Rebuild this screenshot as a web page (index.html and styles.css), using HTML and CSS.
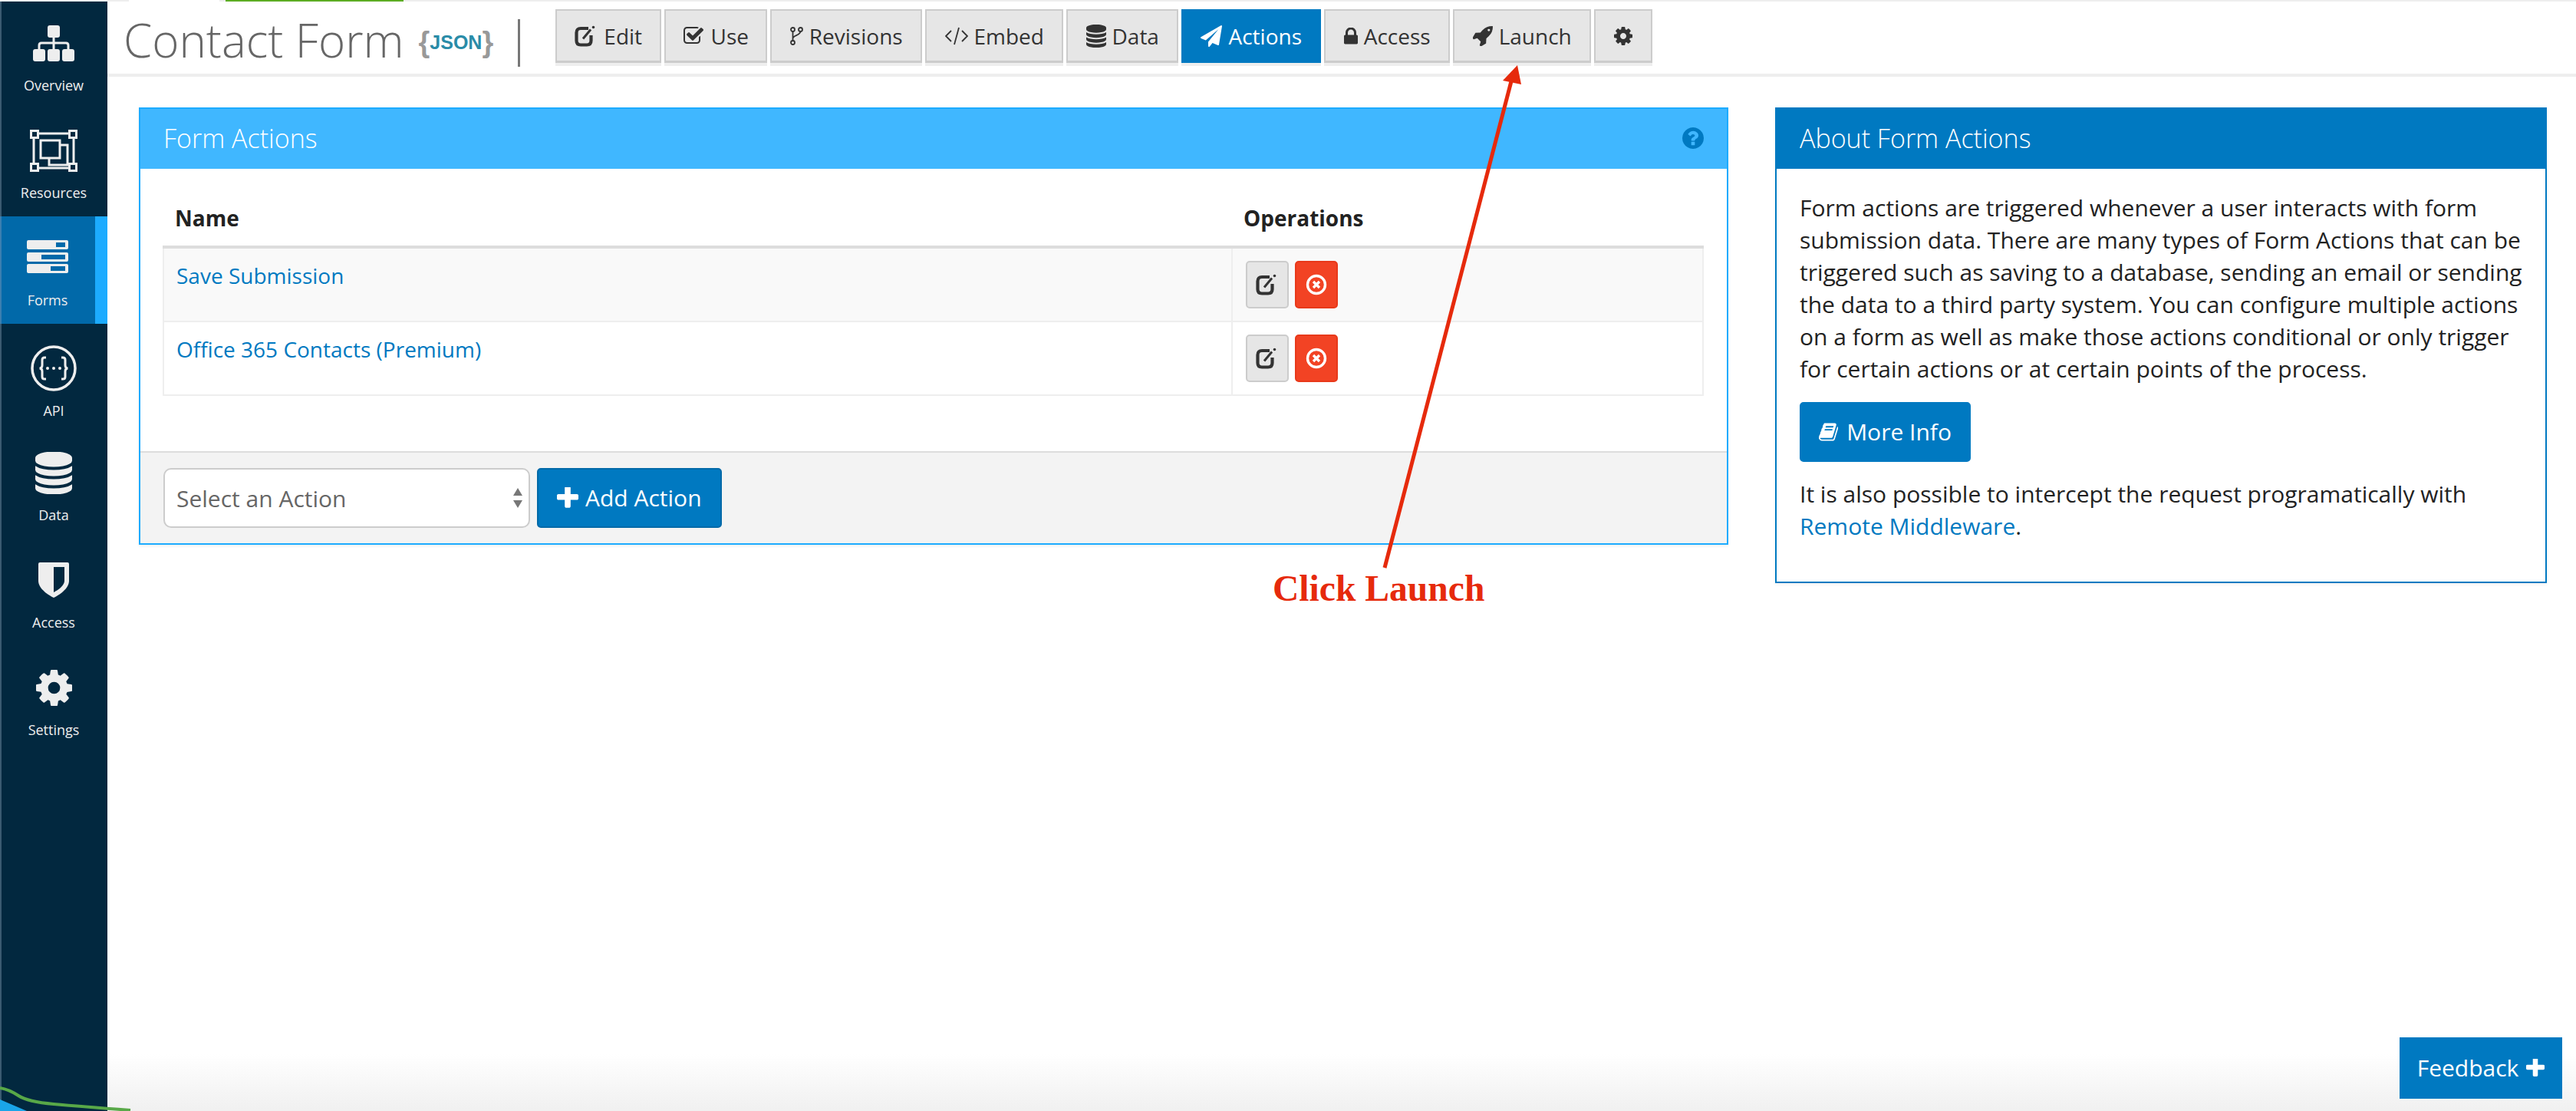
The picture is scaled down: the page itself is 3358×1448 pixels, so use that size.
FILE: index.html

```html
<!DOCTYPE html>
<html lang="en">
<head>
  <meta charset="UTF-8" />
  <meta name="viewport" content="width=device-width, initial-scale=1.0"/>
  <title>Contact Form - Form Actions</title>
  <link rel="stylesheet" href="styles.css">
</head>
<body>
  <svg width="0" height="0" class="defs">
    <symbol id="i-edit" viewBox="0 0 30 28"><path d="M18 4H8Q2.500 4 2.500 9.500V20Q2.500 25.500 8 25.500H16Q21.500 25.500 21.500 20V13" fill="none" stroke="currentColor" stroke-width="4.200"/><path d="M11 17.500L21 5.500" fill="none" stroke="currentColor" stroke-width="3"/><circle cx="24.500" cy="2.500" r="1.800" fill="currentColor"/></symbol>
    <symbol id="i-check" viewBox="0 0 1792 1792"><path d="M1472 930v318q0 119-84.500 203.500t-203.500 84.500h-832q-119 0-203.500-84.500t-84.500-203.500v-832q0-119 84.500-203.500t203.500-84.500h832q63 0 117 25 15 7 18 23 3 17-9 29l-49 49q-10 10-23 10-3 0-9-2-23-6-45-6h-832q-66 0-113 47t-47 113v832q0 66 47 113t113 47h832q66 0 113-47t47-113v-254q0-13 9-22l64-64q10-10 23-10 6 0 12 3 20 8 20 29zm231-489l-814 814q-24 24-57 24t-57-24l-430-430q-24-24-24-57t24-57l110-110q24-24 57-24t57 24l263 263 647-647q24-24 57-24t57 24l110 110q24 24 24 57t-24 57z"/></symbol>
    <symbol id="i-db" viewBox="128 128 1536 1536"><path d="M896 768q237 0 443-43t325-127v170q0 69-103 128t-280 93.500-385 34.500-385-34.500-280-93.500-103-128v-170q119 84 325 127t443 43zm0 768q237 0 443-43t325-127v170q0 69-103 128t-280 93.500-385 34.500-385-34.500-280-93.500-103-128v-170q119 84 325 127t443 43zm0-384q237 0 443-43t325-127v170q0 69-103 128t-280 93.500-385 34.500-385-34.500-280-93.500-103-128v-170q119 84 325 127t443 43zm0-1152q208 0 385 34.500t280 93.500 103 128v128q0 69-103 128t-280 93.500-385 34.500-385-34.500-280-93.500-103-128v-128q0-69 103-128t280-93.500 385-34.500z"/></symbol>
    <symbol id="i-plane" viewBox="0 0 1792 1792"><path d="M1764 11q33 24 27 64l-256 1536q-5 29-32 45-14 8-31 8-11 0-24-5l-453-185-242 295q-18 23-49 23-13 0-22-4-19-7-30.500-23.500t-11.500-36.500v-349l864-1059-1069 925-395-162q-37-14-40-55-2-40 32-59l1664-960q15-9 32-9 20 0 36 11z"/></symbol>
    <symbol id="i-lock" viewBox="320 192 1152 1344"><path d="M640 768h512v-192q0-106-75-181t-181-75-181 75-75 181v192zm832 96v576q0 40-28 68t-68 28h-960q-40 0-68-28t-28-68v-576q0-40 28-68t68-28h32v-192q0-184 132-316t316-132 316 132 132 316v192h32q40 0 68 28t28 68z"/></symbol>
    <symbol id="i-rocket" viewBox="128 128 1600 1600"><path d="M1504 448q0-40-28-68t-68-28-68 28-28 68 28 68 68 28 68-28 28-68zm224-288q0 249-75.500 430.500t-253.500 360.500q-81 80-195 176l-20 379q-2 16-16 26l-384 224q-7 4-16 4-12 0-23-9l-64-64q-13-14-8-32l85-276-281-281-276 85q-3 1-9 1-14 0-23-9l-64-64q-17-19-5-39l224-384q10-14 26-16l379-20q96-114 176-195 188-187 358-258t431-71q14 0 24 9.500t10 22.500z"/></symbol>
    <symbol id="i-cog" viewBox="128 128 1536 1536"><path d="M1152 896q0-106-75-181t-181-75-181 75-75 181 75 181 181 75 181-75 75-181zm512-109v222q0 12-8 23t-20 13l-185 28q-19 54-39 91 35 50 107 138 10 12 10 25t-9 23q-27 37-99 108t-94 71q-12 0-26-9l-138-108q-44 23-91 38-16 136-29 186-7 28-36 28h-222q-14 0-24.500-8.500t-11.500-21.500l-28-184q-49-16-90-37l-141 107q-10 9-25 9-14 0-25-11-126-114-165-168-7-10-7-23 0-12 8-23 15-21 51-66.500t54-70.500q-27-50-41-99l-183-27q-13-2-21-12.500t-8-23.500v-222q0-12 8-23t19-13l186-28q14-46 39-92-40-57-107-138-10-12-10-24 0-10 9-23 26-36 98.500-107.500t94.500-71.500q13 0 26 10l138 107q44-23 91-38 16-136 29-186 7-28 36-28h222q14 0 24.500 8.500t11.500 21.500l28 184q49 16 90 37l142-107q9-9 24-9 13 0 25 10 129 119 165 170 7 8 7 22 0 12-8 23-15 21-51 66.500t-54 70.500q26 50 41 98l183 28q13 2 21 12.500t8 23.500z"/></symbol>
    <symbol id="i-plus" viewBox="192 192 1408 1408"><path d="M1600 736v192q0 40-28 68t-68 28h-416v416q0 40-28 68t-68 28h-192q-40 0-68-28t-28-68v-416h-416q-40 0-68-28t-28-68v-192q0-40 28-68t68-28h416v-416q0-40 28-68t68-28h192q40 0 68 28t28 68v416h416q40 0 68 28t28 68z"/></symbol>
    <symbol id="i-book" viewBox="64 128 1664 1536"><path d="M1703 478q40 57 18 129l-275 906q-19 64-76.500 107.500t-122.500 43.500h-923q-77 0-148.500-53.500t-99.500-131.500q-24-67-2-127 0-4 3-27t4-37q1-8-3-21.500t-3-19.500q2-11 8-21t16.500-23.500 16.500-23.500q23-38 45-91.500t30-91.500q3-10 .5-30t-.5-28q3-11 17-28t17-23q21-36 42-92t25-90q1-9-2.500-32t.5-28q4-13 22-30.500t22-22.500q19-26 42.500-84.500t27.500-96.500q1-8-3-25.500t-2-26.500q2-8 9-18t18-23 17-21q8-12 16.500-30.500t15-35 16-36 19.500-32 26.500-23.500 36-11.500 47.500 5.500l-1 3q38-9 51-9h761q74 0 114 56t18 130l-274 906q-36 119-71.500 153.500t-128.500 34.500h-869q-27 0-38 15-11 16-1 43 24 70 144 70h923q29 0 56-15.500t35-41.500l300-987q7-22 5-57 38 15 59 43zm-1064 2q-4 13 2 22.500t20 9.500h608q13 0 25.500-9.500t16.500-22.500l21-64q4-13-2-22.500t-20-9.500h-608q-13 0-25.500 9.500t-16.500 22.500zm-83 256q-4 13 2 22.500t20 9.500h608q13 0 25.500-9.500t16.500-22.500l21-64q4-13-2-22.500t-20-9.500h-608q-13 0-25.500 9.500t-16.500 22.500z"/></symbol>
    <symbol id="i-help" viewBox="128 128 1536 1536"><path d="M1024 1376v-192q0-14-9-23t-23-9h-192q-14 0-23 9t-9 23v192q0 14 9 23t23 9h192q14 0 23-9t9-23zm256-672q0-88-55.500-163t-138.500-116-170-41q-243 0-371 213-15 24 8 42l132 100q7 6 19 6 16 0 25-12 53-68 86-92 34-24 86-24 48 0 85.500 26t37.500 59q0 38-20 61t-68 45q-63 28-115.500 86.500t-52.500 125.500v36q0 14 9 23t23 9h192q14 0 23-9t9-23q0-19 21.500-49.500t54.500-49.500q32-18 49-28.500t46-35 44.500-48 28-60.500 12.500-81zm384 192q0 209-103 385.500t-279.500 279.500-385.500 103-385.500-103-279.500-279.500-103-385.500 103-385.500 279.500-279.500 385.500-103 385.500 103 279.500 279.500 103 385.500z"/></symbol>
    <symbol id="i-delete" viewBox="0 0 28 28"><circle cx="14" cy="14" r="11.500" fill="none" stroke="currentColor" stroke-width="3.400"/><path d="M10 10l8 8M18 10l-8 8" fill="none" stroke="currentColor" stroke-width="3.400"/></symbol>
  </svg>

  <div class="top-strip"><span class="strip-white"></span><span class="strip-green"></span></div>

  <div class="app">
    <nav class="sidebar">
      <a class="nav-item">
        <span class="nav-icon">
          <svg width="54" height="47" viewBox="0 0 54 47"><rect x="19" y="0" width="16" height="16" rx="3"/><rect x="0" y="31" width="16" height="16" rx="3"/><rect x="19" y="31" width="16" height="16" rx="3"/><rect x="38" y="31" width="16" height="16" rx="3"/><path d="M27 16v15M8 31v-5q0-3 3-3h32q3 0 3 3v5" fill="none" stroke="#eee" stroke-width="3"/></svg>
        </span>
        <span class="nav-label">Overview</span>
      </a>
      <a class="nav-item">
        <span class="nav-icon">
          <svg width="62" height="55" viewBox="0 0 62 55" fill="none" stroke="#eee"><path d="M5 5h52v45H5z" stroke-width="3"/><path d="M1.500 1.500h9v9h-9zM51.500 1.500h9v9h-9zM1.500 44.500h9v9h-9zM51.500 44.500h9v9h-9z" fill="#02283f" stroke-width="3"/><path d="M14 14h25v23H14z" stroke-width="3"/><path d="M39 20h10v26H25v-9" stroke-width="3"/></svg>
        </span>
        <span class="nav-label">Resources</span>
      </a>
      <a class="nav-item active">
        <span class="nav-icon nav-icon-forms">
          <svg width="54" height="43" viewBox="0 0 54 43"><rect width="54" height="12" y="0" rx="2" fill="#eee"/><rect x="38" y="3" width="12" height="6" fill="#0169a9"/><rect width="54" height="12" y="16" rx="2" fill="#eee"/><rect x="19" y="19" width="31" height="6" fill="#0169a9"/><rect width="54" height="12" y="31" rx="2" fill="#eee"/><rect x="31" y="34" width="19" height="6" fill="#0169a9"/></svg>
        </span>
        <span class="nav-label">Forms</span>
      </a>
      <a class="nav-item">
        <span class="nav-icon nav-icon-api">
          <svg width="60" height="60" viewBox="0 0 60 60" fill="none" stroke="#eee"><circle cx="30" cy="30" r="28" stroke-width="3.500"/><path d="M20 16h-2q-3 0-3 3v7q0 4-3.500 4 3.500 0 3.500 4v7q0 3 3 3h2M40 16h2q3 0 3 3v7q0 4 3.500 4-3.500 0-3.500 4v7q0 3-3 3h-2" stroke-width="3"/><circle cx="22" cy="30" r="2" fill="#eee" stroke="none"/><circle cx="30" cy="30" r="2" fill="#eee" stroke="none"/><circle cx="38" cy="30" r="2" fill="#eee" stroke="none"/></svg>
        </span>
        <span class="nav-label">API</span>
      </a>
      <a class="nav-item">
        <span class="nav-icon"><svg class="side-fa" width="48" height="55"><use href="#i-db"/></svg></span>
        <span class="nav-label">Data</span>
      </a>
      <a class="nav-item">
        <span class="nav-icon">
          <svg width="40" height="46" viewBox="0 0 40 46"><path d="M2 0H38Q40 0 40 2V24C40 34 28 42 20 46C12 42 0 34 0 24V2Q0 0 2 0Z" fill="#eee"/><path d="M20 6H34V24C34 30 26 36 20 39Z" fill="#02283f"/></svg>
        </span>
        <span class="nav-label">Access</span>
      </a>
      <a class="nav-item">
        <span class="nav-icon"><svg class="side-fa" width="47" height="47"><use href="#i-cog"/></svg></span>
        <span class="nav-label">Settings</span>
      </a>
    </nav>

    <main class="main">
      <header class="page-header">
        <h1 class="page-title">Contact Form</h1>
        <span class="json-logo"><span class="brace">{</span><span class="json-text">JSON</span><span class="brace">}</span></span>
        <span class="title-divider"></span>
        <div class="tabs">
          <a class="tab tab-edit"><svg width="30" height="28"><use href="#i-edit"/></svg>Edit</a>
          <a class="tab tab-use"><svg width="28" height="28"><use href="#i-check"/></svg>Use</a>
          <a class="tab tab-rev">
            <svg width="17" height="24" viewBox="0 0 17 24" fill="none" stroke="#333" stroke-width="1.800"><circle cx="3.500" cy="3.500" r="2.500"/><circle cx="3.500" cy="20.500" r="2.500"/><circle cx="13.500" cy="3.500" r="2.500"/><path d="M3.500 6v12M13.500 6c0 5-10 5-10 9"/></svg>Revisions</a>
          <a class="tab tab-embed">
            <svg width="30" height="24" viewBox="0 0 30 24" fill="none" stroke="#333" stroke-width="1.800"><path d="M8 5l-7 7 7 7M22 5l7 7-7 7M18 1l-6 22"/></svg>Embed</a>
          <a class="tab tab-data"><svg width="26" height="30"><use href="#i-db"/></svg>Data</a>
          <a class="tab tab-actions active"><svg width="28" height="28"><use href="#i-plane"/></svg>Actions</a>
          <a class="tab tab-access"><svg width="18" height="22"><use href="#i-lock"/></svg>Access</a>
          <a class="tab tab-launch"><svg width="26" height="26"><use href="#i-rocket"/></svg>Launch</a>
          <a class="tab tab-gear"><svg width="24" height="24"><use href="#i-cog"/></svg></a>
        </div>
      </header>

      <div class="content">
        <section class="panel panel-actions">
          <div class="panel-heading">
            <span class="panel-title">Form Actions</span>
            <svg class="help" width="28" height="28"><use href="#i-help"/></svg>
          </div>
          <div class="panel-body">
            <table class="actions-table">
              <thead>
                <tr><th>Name</th><th class="col-ops">Operations</th></tr>
              </thead>
              <tbody>
                <tr class="odd">
                  <td class="col-name"><a class="link">Save Submission</a></td>
                  <td class="col-ops">
                    <a class="btn-op btn-op-edit"><svg width="30" height="28"><use href="#i-edit"/></svg></a>
                    <a class="btn-op btn-op-delete"><svg width="28" height="28"><use href="#i-delete"/></svg></a>
                  </td>
                </tr>
                <tr>
                  <td class="col-name"><a class="link">Office 365 Contacts (Premium)</a></td>
                  <td class="col-ops">
                    <a class="btn-op btn-op-edit"><svg width="30" height="28"><use href="#i-edit"/></svg></a>
                    <a class="btn-op btn-op-delete"><svg width="28" height="28"><use href="#i-delete"/></svg></a>
                  </td>
                </tr>
              </tbody>
            </table>
          </div>
          <div class="panel-footer">
            <div class="select-wrap">
              <select class="select-action"><option>Select an Action</option></select>
              <svg class="select-arrows" width="14" height="26" viewBox="0 0 14 26" fill="#777"><path d="M7 0l6 10H1zM7 26l6-10H1z"/></svg>
            </div>
            <a class="btn btn-primary"><svg width="28" height="28"><use href="#i-plus"/></svg>Add Action</a>
          </div>
        </section>

        <aside class="panel panel-about">
          <div class="panel-heading"><span class="panel-title">About Form Actions</span></div>
          <div class="about-body">
            <p>Form actions are triggered whenever a user interacts with form submission data. There are many types of Form Actions that can be triggered such as saving to a database, sending an email or sending the data to a third party system. You can configure multiple actions on a form as well as make those actions conditional or only trigger for certain actions or at certain points of the process.</p>
            <a class="btn btn-primary btn-info"><svg width="27" height="26"><use href="#i-book"/></svg>More Info</a>
            <p>It is also possible to intercept the request programatically with <a class="link">Remote Middleware</a>.</p>
          </div>
        </aside>
      </div>
    </main>
  </div>

  <div class="bottom-fade"></div>
  <svg class="corner-curve" width="180" height="40" viewBox="0 0 180 40"><path d="M0 25L35 40H0Z" fill="#1aa5e8"/><path d="M0 10Q12 12 24 20T70 31T170 39" fill="none" stroke="#58a848" stroke-width="4"/></svg>

  <a class="feedback">Feedback<svg width="24" height="24"><use href="#i-plus"/></svg></a>

  <svg class="annotation-arrow" width="3358" height="1448" viewBox="0 0 3358 1448">
    <path d="M1805 740L1970 106" fill="none" stroke="#e62a0c" stroke-width="5"/>
    <path d="M1978 85L1983 110L1959 105Z" fill="#e62a0c"/>
  </svg>
  <div class="annotation-text">Click Launch</div>
</body>
</html>
```

FILE: styles.css

```css
html, body {
  height: 100%;
}
body {
  margin: 0;
  width: 3358px;
  height: 1448px;
  overflow: hidden;
  position: relative;
  background-color: #fff;
  font-family: "Open Sans", "Noto Sans", sans-serif;
  font-size: 28px;
  line-height: 42px;
  color: #222;
}
.defs {
  position: absolute;
}

/* top loader strip */
.top-strip {
  display: flex;
  height: 2px;
  background-color: #eee;
}
.strip-white {
  width: 118px;
  margin-left: 168px;
  background-color: #fff;
}
.strip-green {
  width: 232px;
  margin-left: 8px;
  background-color: #5cad23;
}

.app {
  display: flex;
  height: 1446px;
}

/* sidebar */
.sidebar {
  width: 140px;
  flex: none;
  background-color: #02283f;
  box-shadow: inset 2px 0 0 #3b5a70;
}
.nav-item {
  display: flex;
  flex-direction: column;
  align-items: center;
  height: 140px;
  padding-top: 24px;
  box-sizing: border-box;
  color: #eee;
}
.nav-item.active {
  background-color: #0169a9;
  border-right: 16px solid #1cabff;
  box-shadow: inset 2px 0 0 #3b7fb0;
}
.nav-icon {
  display: flex;
  align-items: center;
  justify-content: center;
  height: 60px;
  fill: #eee;
}
.nav-icon-forms {
  padding-bottom: 4px;
  height: 56px;
}
.nav-icon-api {
  padding-top: 8px;
  height: 52px;
}
.nav-icon-api + .nav-label {
  margin-top: 17px;
}
.side-fa {
  fill: #eee;
}
.nav-label {
  margin-top: 13px;
  font-size: 18px;
  line-height: 24px;
}

/* header */
.main {
  flex: 1;
  min-width: 0;
}
.page-header {
  display: flex;
  align-items: flex-start;
  height: 94px;
  padding-left: 21px;
  border-bottom: 4px solid #eee;
}
.page-title {
  margin: 12px 0 0;
  font-size: 60px;
  line-height: 76px;
  font-weight: 300;
  color: #666;
  white-space: nowrap;
}
.json-logo {
  display: flex;
  align-items: center;
  height: 38px;
  margin: 34px 0 0 19px;
  font-family: "Liberation Sans", Arial, sans-serif;
  font-weight: 700;
}
.brace {
  font-size: 38px;
  font-weight: 700;
  color: #999;
}
.json-text {
  font-size: 25px;
  color: #2a8ca8;
}
.title-divider {
  width: 3px;
  height: 62px;
  margin: 23px 0 0 32px;
  background-color: #777;
}
.tabs {
  display: flex;
  gap: 4px;
  margin: 10px 0 0 46px;
}
.tab {
  display: flex;
  align-items: center;
  justify-content: center;
  gap: 8px;
  height: 70px;
  box-sizing: border-box;
  background-color: #e6e6e6;
  border: 2px solid #ccc;
  border-bottom-width: 3px;
  box-shadow: 0 4px 0 #eee;
  color: #333;
  fill: #333;
}
.tab.active {
  background-color: #0079c1;
  border-color: #0079c1;
  box-shadow: 0 4px 0 #eee;
  color: #fff;
  fill: #fff;
}
.tab-edit { width: 138px; }
.tab-use { width: 134px; }
.tab-rev { width: 198px; }
.tab-embed { width: 180px; }
.tab-data { width: 146px; }
.tab-actions { width: 182px; }
.tab-access { width: 164px; }
.tab-launch { width: 180px; }
.tab-gear { width: 76px; }

/* panels */
.content {
  display: flex;
  gap: 61px;
  align-items: flex-start;
  padding: 40px 38px 0 41px;
}
.panel {
  box-sizing: border-box;
  background-color: #fff;
  border: 2px solid #1cabff;
  box-shadow: 0 2px 4px rgba(0, 0, 0, 0.06);
}
.panel-actions {
  flex: 1;
  min-width: 0;
}
.panel-about {
  width: 1006px;
  flex: none;
  height: 620px;
  border-color: #0079c1;
}
.panel-heading {
  display: flex;
  align-items: center;
  justify-content: space-between;
  box-sizing: border-box;
  height: 78px;
  padding: 0 30px 2px;
  background-color: #40b7ff;
  color: #fff;
}
.panel-about .panel-heading {
  background-color: #0079c1;
}
.panel-title {
  font-size: 34px;
  font-weight: 300;
}
.help {
  fill: #0079c1;
}
.panel-body {
  padding: 30px 30px 72px 29px;
}

/* table */
.actions-table {
  width: 100%;
  border-collapse: collapse;
}
.actions-table th {
  padding: 13px 16px 15px 15px;
  text-align: left;
  font-weight: 700;
  border-bottom: 4px solid #ddd;
}
.actions-table td {
  padding: 16px;
  vertical-align: top;
  border: 2px solid #eee;
}
.actions-table td.col-name {
  padding-top: 14px;
}
.actions-table tr.odd td {
  background-color: #f9f9f9;
}
.col-ops {
  width: 614px;
  box-sizing: border-box;
}
.actions-table td.col-ops {
  padding-left: 17px;
  font-size: 0;
  line-height: 0;
}
.link {
  color: #0079c1;
}
.btn-op {
  display: inline-flex;
  align-items: center;
  justify-content: center;
  vertical-align: top;
  width: 56px;
  height: 62px;
  box-sizing: border-box;
  border: 2px solid #ccc;
  border-radius: 5px;
  background-color: #e6e6e6;
  color: #333;
}
.btn-op-delete {
  margin-left: 8px;
  background-color: #f24324;
  border-color: #e8391a;
  color: #fff;
}

/* footer of the panel */
.panel-footer {
  display: flex;
  gap: 9px;
  padding: 20px 30px;
  background-color: #f3f3f3;
  border-top: 2px solid #ddd;
}
.select-wrap {
  position: relative;
  width: 478px;
  height: 78px;
}
.select-action {
  appearance: none;
  width: 100%;
  height: 100%;
  padding: 0 15px;
  background-color: #fff;
  border: 2px solid #ccc;
  border-radius: 10px;
  font-family: inherit;
  font-size: 30px;
  color: #666;
}
.select-arrows {
  position: absolute;
  top: 26px;
  right: 9px;
}
.btn {
  display: inline-flex;
  align-items: center;
  box-sizing: border-box;
  height: 78px;
  padding: 0 24px;
  border-radius: 5px;
  border: 2px solid #0069a8;
  font-size: 30px;
  white-space: nowrap;
}
.btn-primary {
  gap: 9px;
  background-color: #0079c1;
  color: #fff;
  fill: #fff;
}

/* about panel */
.about-body {
  padding: 30px 30px 0;
  background-color: #fff;
  font-size: 30px;
}
.about-body p {
  margin: 0;
}
.btn-info {
  display: flex;
  width: 223px;
  margin: 22px 0 21px;
  padding: 0 23px;
  gap: 11px;
  border-color: #0079c1;
}

/* fixed bits */
.bottom-fade {
  position: absolute;
  left: 140px;
  right: 0;
  bottom: 0;
  height: 74px;
  background: linear-gradient(to bottom, #fff, #f0f0f0);
}
.corner-curve {
  position: absolute;
  left: 0;
  bottom: 0;
}
.feedback {
  position: absolute;
  right: 18px;
  bottom: 16px;
  display: flex;
  align-items: center;
  justify-content: center;
  gap: 10px;
  width: 212px;
  height: 80px;
  background-color: #0079c1;
  color: #fff;
  fill: #fff;
  font-size: 30px;
}

/* red annotation drawn over the screenshot */
.annotation-arrow {
  position: absolute;
  left: 0;
  top: 0;
  pointer-events: none;
}
.annotation-text {
  position: absolute;
  left: 1659px;
  top: 738px;
  font-family: "Liberation Serif", "Times New Roman", serif;
  font-size: 47.600px;
  line-height: 58px;
  font-weight: 700;
  color: #e62a0c;
  white-space: nowrap;
}
```
